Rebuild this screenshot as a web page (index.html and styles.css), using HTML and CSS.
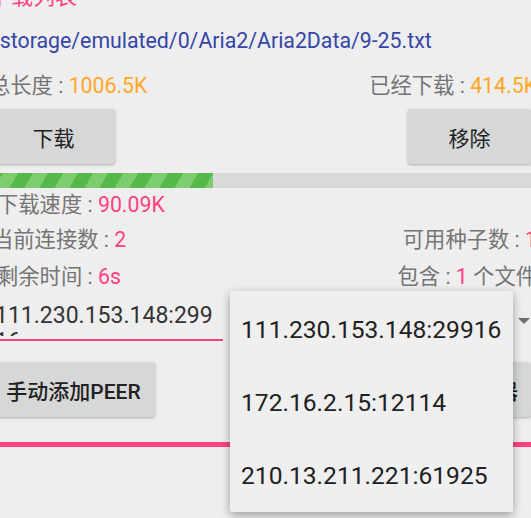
FILE: index.html
```html
<!DOCTYPE html>
<html lang="zh-CN">
<head>
<meta charset="utf-8">
<link rel="stylesheet" href="styles.css">
</head>
<body>
<div class="screen">
  <div class="title">下载列表</div>
  <div class="path">/storage/emulated/0/Aria2/Aria2Data/9-25.txt</div>
  <div class="row row-size">
    <span class="label">总长度 : <span class="val-orange">1006.5K</span></span>
    <span class="label">已经下载 : <span class="val-orange">414.5K</span></span>
  </div>
  <div class="btn-row">
    <button class="btn btn-wide">下载</button>
    <button class="btn btn-wide">移除</button>
  </div>
  <div class="progress"><div class="progress-fill" style="width:225px"></div></div>
  <div class="row row-speed">
    <span class="label">下载速度 : <span class="val-pink">90.09K</span></span>
  </div>
  <div class="row row-conn">
    <span class="label">当前连接数 : <span class="val-pink">2</span></span>
    <span class="label">可用种子数 : <span class="val-pink">1</span></span>
  </div>
  <div class="row row-left">
    <span class="label">剩余时间 : <span class="val-pink">6s</span></span>
    <span class="label">包含 : <span class="val-pink">1</span> 个文件</span>
  </div>
  <div class="peer-row">
    <div class="edit"><div class="edit-text">111.230.153.148:29916</div></div>
    <div class="spinner"><span class="arrow"></span></div>
  </div>
  <div class="btn-row2">
    <button class="btn btn-peer">手动添加PEER</button>
    <button class="btn btn-tracker">添加服务器</button>
  </div>
  <div class="pink-line"></div>
</div>
<div class="popup">
  <div class="item">111.230.153.148:29916</div>
  <div class="item">172.16.2.15:12114</div>
  <div class="item">210.13.211.221:61925</div>
</div>
</body>
</html>
```
FILE: styles.css
```css
html, body {
  margin: 0;
  padding: 0;
}
body {
  position: relative;
  width: 531px;
  height: 518px;
  overflow: hidden;
  background: #eeeeee;
  font-family: Roboto, "Noto Sans CJK SC", sans-serif;
}
.screen {
  margin-left: -12px;
  width: 549px;
}
.title {
  margin-top: -18px;
  height: 30px;
  line-height: 30px;
  font-size: 22px;
  color: #ff4081;
  padding-left: 1px;
}
.path {
  height: 58px;
  line-height: 58px;
  font-size: 21.3px;
  color: #3545a8;
  padding-left: 3px;
  white-space: nowrap;
}
.row {
  display: flex;
  justify-content: space-between;
  font-size: 21.3px;
  color: #757575;
  white-space: nowrap;
}
.val-orange { color: #ffa726; }
.val-pink { color: #ff4081; }
.row-size { height: 32px; line-height: 32px; padding-left: 1px; }
.row-speed { height: 34px; line-height: 34px; padding-left: 9px; }
.row-conn { height: 36px; line-height: 36px; padding-left: 4px; }
.row-left { height: 38px; line-height: 38px; padding-left: 9px; }
.btn-row {
  display: flex;
  justify-content: space-between;
  padding: 7px 6px 7px 4px;
}
.btn {
  font-family: inherit;
  font-size: 21px;
  color: #212121;
  background: #d6d7d7;
  border: 0;
  border-radius: 3px;
  box-shadow: 0 1px 3px rgba(0, 0, 0, 0.28);
  height: 55px;
  padding: 0;
}
.btn-wide { width: 123px; }
.progress {
  margin-top: 2px;
  height: 15px;
  background: #d9d9d9;
}
.progress-fill {
  height: 100%;
  background: repeating-linear-gradient(120deg, #55b94a 0 13px, #7dcc6e 13px 26px);
}
.peer-row {
  display: flex;
}
.edit {
  box-sizing: border-box;
  margin-left: 4px;
  width: 231px;
  padding: 7px 4px 3px 3px;
  border-bottom: 2px solid #ff4081;
}
.edit-text {
  height: 33px;
  line-height: 26px;
  font-size: 23px;
  color: #333333;
  word-break: break-all;
  overflow: hidden;
}
.spinner {
  flex: 1;
  display: flex;
  justify-content: flex-end;
  align-items: flex-start;
  padding: 22px 7px 0 0;
}
.arrow {
  width: 0;
  height: 0;
  border-left: 6px solid transparent;
  border-right: 6px solid transparent;
  border-top: 6px solid #6f6f6f;
}
.btn-row2 {
  display: flex;
  justify-content: space-between;
  padding: 21px 6px 0 4px;
}
.btn-peer {
  width: 163px;
  font-weight: 500;
}
.btn-tracker {
  padding: 0 13px;
  font-weight: 500;
}
.pink-line {
  margin-top: 25px;
  height: 5px;
  background: #ff4081;
}
.popup {
  position: absolute;
  left: 230px;
  top: 291px;
  width: 283px;
  height: 221px;
  box-sizing: border-box;
  padding-top: 2px;
  background: #efefef;
  border-radius: 2px;
  box-shadow: 0 3px 10px rgba(0, 0, 0, 0.35);
}
.item {
  height: 73px;
  line-height: 73px;
  padding-left: 11px;
  font-size: 24.6px;
  color: #212121;
  white-space: nowrap;
}
```
